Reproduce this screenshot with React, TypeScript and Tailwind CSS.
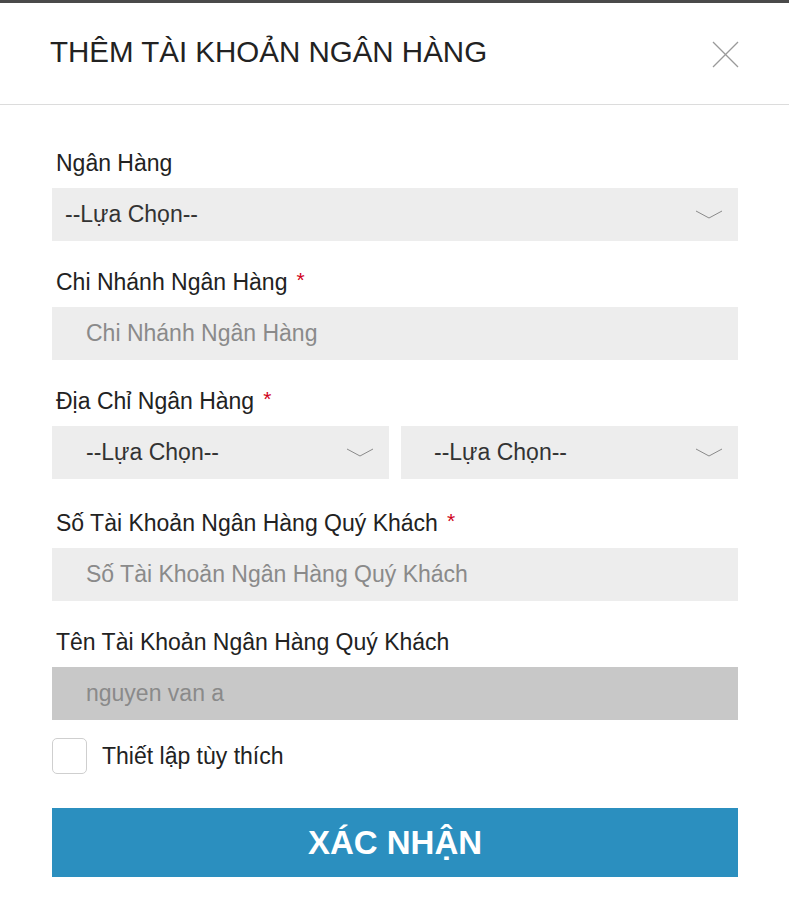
import React from "react";

const font = { fontFamily: '"Liberation Sans", Arial, sans-serif' };

const Chevron = () => (
  <svg width="28" height="10" viewBox="0 0 28 10" className="shrink-0">
    <polyline points="1,1 14,8 27,1" fill="none" stroke="#8a8a8a" strokeWidth="1" />
  </svg>
);

const Label = ({ text, required }: { text: string; required?: boolean }) => (
  <div className="h-[30px] mb-[10px] flex items-center pl-1 text-[23px] text-[#222]">
    {text}
    {required && <span className="ml-[9px] -mt-[5px] text-[21px] text-[#d0021b]">*</span>}
  </div>
);

const Select = ({ pad = "pl-[13px]" }: { pad?: string }) => (
  <div className={`h-[53px] bg-[#ededed] flex items-center justify-between ${pad} pr-[15px] text-[23px] text-[#333]`}>
    <span>--Lựa Chọn--</span>
    <Chevron />
  </div>
);

const Input = ({ text, disabled }: { text: string; disabled?: boolean }) => (
  <div
    className={`h-[53px] flex items-center pl-[34px] text-[23px] text-[#8a8a8a] ${
      disabled ? "bg-[#c8c8c8]" : "bg-[#ededed]"
    }`}
  >
    {text}
  </div>
);

export default function App() {
  return (
    <div className="w-[789px] h-[908px] bg-white overflow-hidden" style={font}>
      <div className="h-[3px] bg-[#4a4a4a]" />
      <div className="h-[102px] border-b border-[#dcdcdc] flex items-center justify-between pl-[50px] pr-[50px]">
        <h1 className="text-[29.5px] text-[#222] -mt-[2px]">THÊM TÀI KHOẢN NGÂN HÀNG</h1>
        <svg width="27" height="27" viewBox="0 0 27 27" className="mt-[2px]">
          <line x1="1" y1="1" x2="26" y2="26" stroke="#9a9a9a" strokeWidth="1.3" />
          <line x1="26" y1="1" x2="1" y2="26" stroke="#9a9a9a" strokeWidth="1.3" />
        </svg>
      </div>

      <div className="pl-[52px] pr-[51px] pt-[43px]">
        <div className="mb-[26px]">
          <Label text="Ngân Hàng" />
          <Select />
        </div>
        <div className="mb-[26px]">
          <Label text="Chi Nhánh Ngân Hàng" required />
          <Input text="Chi Nhánh Ngân Hàng" />
        </div>
        <div className="mb-[29px]">
          <Label text="Địa Chỉ Ngân Hàng" required />
          <div className="grid grid-cols-2 gap-[12px]">
            <Select pad="pl-[34px]" />
            <Select pad="pl-[33px]" />
          </div>
        </div>
        <div className="mb-[26px]">
          <Label text="Số Tài Khoản Ngân Hàng Quý Khách" required />
          <Input text="Số Tài Khoản Ngân Hàng Quý Khách" />
        </div>
        <div className="mb-[18px]">
          <Label text="Tên Tài Khoản Ngân Hàng Quý Khách" />
          <Input text="nguyen van a" disabled />
        </div>
        <div className="flex items-center gap-[15px] mb-[34px]">
          <div className="w-[35px] h-[36px] rounded-[5px] border border-[#cfcfcf] bg-white" />
          <span className="text-[23px] text-[#222]">Thiết lập tùy thích</span>
        </div>
        <button className="w-full h-[69px] bg-[#2b8fbf] text-white font-bold text-[33px] flex items-center justify-center">
          XÁC NHẬN
        </button>
      </div>
    </div>
  );
}
